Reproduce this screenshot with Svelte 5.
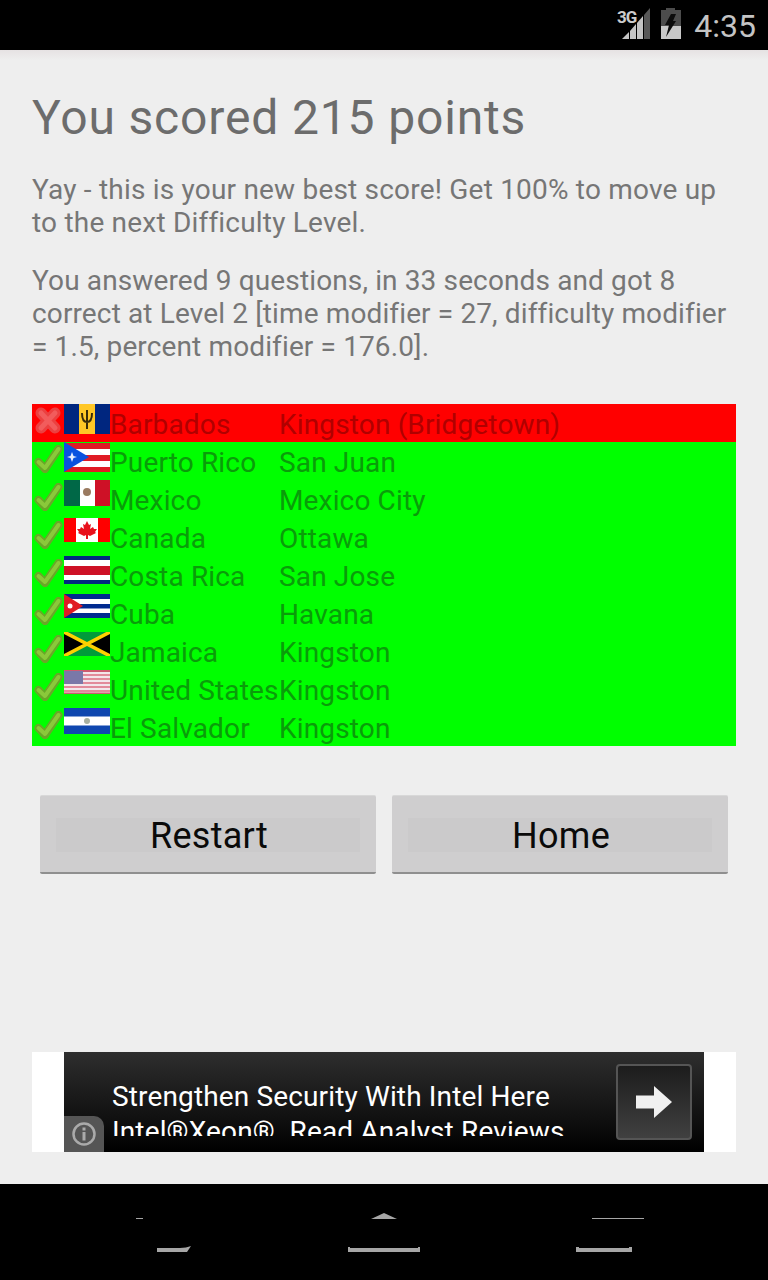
<script>
  const rows = [
    { flag: 'bb', name: 'Barbados', capital: 'Kingston (Bridgetown)', ok: false },
    { flag: 'pr', name: 'Puerto Rico', capital: 'San Juan', ok: true },
    { flag: 'mx', name: 'Mexico', capital: 'Mexico City', ok: true },
    { flag: 'ca', name: 'Canada', capital: 'Ottawa', ok: true },
    { flag: 'cr', name: 'Costa Rica', capital: 'San Jose', ok: true },
    { flag: 'cu', name: 'Cuba', capital: 'Havana', ok: true },
    { flag: 'jm', name: 'Jamaica', capital: 'Kingston', ok: true },
    { flag: 'us', name: 'United States', capital: 'Kingston', ok: true },
    { flag: 'sv', name: 'El Salvador', capital: 'Kingston', ok: true }
  ];

  // flag heights differ a little in the source images
  const flagHeight = { bb: 30, pr: 30, mx: 26, ca: 24, cr: 28, cu: 24, jm: 24, us: 24, sv: 26 };
</script>

<div class="screen">
  <header class="status-bar">
    <svg class="signal" width="30" height="32" viewBox="0 0 30 32">
      <path d="M29 0V31H23V7Z" fill="#585858" />
      <path d="M22 8V31H16V15Z" fill="#c4c4c4" />
      <path d="M15 16V31H9V23Z" fill="#c4c4c4" />
      <path d="M8 24V31H1Z" fill="#c4c4c4" />
    </svg>
    <span class="net">3G</span>
    <svg class="battery" width="22" height="32" viewBox="0 0 22 32">
      <path d="M6 0H15V2H21V31H1V2H6Z" fill="#4c4c4c" />
      <path d="M1 18H21V31H1Z" fill="#c8c8c8" />
      <path d="M11 6H16L13 13H16L6 29L9 17H5Z" fill="#0c0c0c" />
    </svg>
    <span class="clock">4:35</span>
  </header>

  <main class="content">
    <h1>You scored 215 points</h1>
    <p class="best">Yay - this is your new best score! Get 100% to move up to the next Difficulty Level.</p>
    <p class="detail">You answered 9 questions, in 33 seconds and got 8 correct at Level 2 [time modifier = 27, difficulty modifier = 1.5, percent modifier = 176.0].</p>

    <div class="results">
      {#each rows as row}
        <div class="row" class:wrong={!row.ok}>
          <svg class="mark" width="32" height="38" viewBox="0 0 32 38">
            {#if row.ok}
              <path d="M6.500 20L13 27L26.500 7" fill="none" stroke="#69a728" stroke-width="8" stroke-linecap="round" stroke-linejoin="round" />
              <path d="M6.500 20L13 26L26.500 7" fill="none" stroke="#8ac93a" stroke-width="4" stroke-linecap="round" stroke-linejoin="round" />
            {:else}
              <path d="M9 9L23 24M23 9L9 24" fill="none" stroke="#ec4040" stroke-width="11" stroke-linecap="round" />
              <path d="M9 9L23 24M23 9L9 24" fill="none" stroke="#f25c5c" stroke-width="5" stroke-linecap="round" />
            {/if}
          </svg>
          <svg class="flag" width="46" height={flagHeight[row.flag]} viewBox="0 0 46 {flagHeight[row.flag]}" preserveAspectRatio="none">
            {#if row.flag === 'bb'}
              <rect width="46" height="30" fill="#00267f" />
              <rect x="15" width="16" height="30" fill="#ffc726" />
              <path d="M23 6V25M18 9C18 15 20 18 23 18C26 18 28 15 28 9" stroke="#3a2c08" stroke-width="2" fill="none" />
            {:else if row.flag === 'pr'}
              <rect y="1" width="46" height="29" fill="#fff" />
              <rect y="1" width="46" height="6" fill="#e01b24" />
              <rect y="13" width="46" height="6" fill="#e01b24" />
              <rect y="25" width="46" height="5" fill="#e01b24" />
              <path d="M0 0L25 15L0 30Z" fill="#0a52e0" />
              <path d="M8 10L9.500 14L13 15L9.500 16L8 20L6.500 16L3 15L6.500 14Z" fill="#e8eeff" />
            {:else if row.flag === 'mx'}
              <rect width="16" height="26" fill="#006847" />
              <rect x="16" width="15" height="26" fill="#fff" />
              <rect x="31" width="15" height="26" fill="#ce1126" />
              <circle cx="23" cy="12" r="4" fill="#9a7a60" />
            {:else if row.flag === 'ca'}
              <rect width="46" height="24" fill="#ff0000" />
              <rect x="12" width="22" height="24" fill="#fff" />
              <path d="M23 3L25 7L27 6L26 11L29 9L30 11L33 11L31 14L32 15L26 18L24 17V21H22V17L20 18L14 15L15 14L13 11L16 11L17 9L20 11L19 6L21 7Z" fill="#e8101c" />
            {:else if row.flag === 'cr'}
              <rect width="46" height="28" fill="#fff" />
              <rect width="46" height="4" fill="#002b7f" />
              <rect y="24" width="46" height="4" fill="#002b7f" />
              <rect y="10" width="46" height="9" fill="#ce1126" />
            {:else if row.flag === 'cu'}
              <rect width="46" height="24" fill="#fff" />
              <rect width="46" height="5" fill="#002a8f" />
              <rect y="10" width="46" height="4.500" fill="#002a8f" />
              <rect y="19" width="46" height="5" fill="#002a8f" />
              <path d="M0 0L19 12L0 24Z" fill="#e01b24" />
              <circle cx="6" cy="12" r="2.500" fill="#fff" />
            {:else if row.flag === 'jm'}
              <rect width="46" height="24" fill="#009b3a" />
              <path d="M0 0L23 12L0 24ZM46 0L23 12L46 24Z" fill="#000" />
              <path d="M0 0L46 24M46 0L0 24" stroke="#fed100" stroke-width="3.500" />
            {:else if row.flag === 'us'}
              <rect width="46" height="24" fill="#f2e6ea" />
              <rect width="46" height="2" fill="#cf5a6e" />
              <rect y="4" width="46" height="2" fill="#e28a9a" />
              <rect y="8" width="46" height="2" fill="#e28a9a" />
              <rect y="12" width="46" height="2" fill="#e28a9a" />
              <rect y="16" width="46" height="2" fill="#e28a9a" />
              <rect y="20" width="46" height="2" fill="#e28a9a" />
              <rect y="22.500" width="46" height="1.500" fill="#cf5a6e" />
              <rect y="1" width="19" height="13" fill="#7a78a8" />
            {:else}
              <rect width="46" height="26" fill="#fff" />
              <rect width="46" height="8.500" fill="#0f47af" />
              <rect y="17.500" width="46" height="8.500" fill="#0f47af" />
              <circle cx="23" cy="13" r="3" fill="#a8b0a0" />
            {/if}
          </svg>
          <span class="name">{row.name}</span>
          <span class="capital">{row.capital}</span>
        </div>
      {/each}
    </div>

    <div class="actions">
      <button><span>Restart</span></button>
      <button><span>Home</span></button>
    </div>

    <div class="ad">
      <div class="ad-inner">
        <div class="ad-text">
          <div>Strengthen Security With Intel Here</div>
          <div>Intel®Xeon®. Read Analyst Reviews</div>
        </div>
        <div class="ad-go">
          <svg width="36" height="32" viewBox="0 0 36 32">
            <path d="M0 9.500H18V0L36 16L18 32V22.500H0Z" fill="#f0f0f0" />
          </svg>
        </div>
        <div class="ad-info">
          <svg width="26" height="26" viewBox="0 0 26 26">
            <circle cx="13" cy="13" r="10.500" fill="none" stroke="#aaa" stroke-width="2.500" />
            <rect x="11.500" y="6.500" width="3" height="3" fill="#aaa" />
            <rect x="11.500" y="11" width="3" height="8.500" fill="#aaa" />
          </svg>
        </div>
      </div>
    </div>
  </main>

  <nav class="nav-bar">
    <svg width="768" height="96" viewBox="0 0 768 96">
      <g fill="#a6a6a6">
        <rect x="136" y="34" width="7" height="1" />
        <path d="M157 64H180C184 64 188 63 191 62L187 68H157Z" />
        <path d="M371 35L384 29L397 35Z" />
        <path d="M348 63H350V64H418V63H420V68H348Z" />
        <rect x="592" y="34" width="52" height="1" />
        <path d="M576 63H579V64H629V63H632V68H576Z" />
      </g>
    </svg>
  </nav>
</div>

<style>
  :global(body) {
    margin: 0;
    background: #eee;
  }

  .screen {
    width: 768px;
    height: 1280px;
    display: flex;
    flex-direction: column;
    font-family: Roboto, "Liberation Sans", sans-serif;
    overflow: hidden;
  }

  .status-bar {
    height: 50px;
    flex: none;
    background: #000;
    display: flex;
    align-items: center;
    justify-content: flex-end;
    padding-right: 12px;
    box-sizing: border-box;
    position: relative;
  }

  .signal {
    position: absolute;
    left: 621px;
    top: 8px;
  }

  .net {
    position: absolute;
    left: 617px;
    top: 8px;
    color: #ccc;
    font-size: 17px;
    font-weight: 700;
    line-height: 18px;
    letter-spacing: -1px;
  }

  .battery {
    position: absolute;
    left: 660px;
    top: 8px;
  }

  .clock {
    color: #c4c4c4;
    font-size: 32px;
    line-height: 50px;
    padding-top: 1px;
  }

  .content {
    flex: 1;
    padding: 33px 32px 0;
    background: linear-gradient(#e6e2e3, #eee 10px);
    display: flex;
    flex-direction: column;
  }

  h1 {
    margin: 0;
    font-size: 48px;
    font-weight: 400;
    line-height: 70px;
    letter-spacing: 0.85px;
    color: #6c6c6c;
  }

  p {
    margin: 0;
    font-size: 28px;
    line-height: 33px;
    letter-spacing: 0.2px;
    color: #767676;
  }

  .best {
    margin-top: 20px;
  }

  .detail {
    margin-top: 25px;
    letter-spacing: 0.13px;
  }

  .results {
    margin-top: 41px;
    background: #0f0;
  }

  .row {
    height: 38px;
    display: flex;
    align-items: flex-start;
    font-size: 28px;
    line-height: 42px;
    letter-spacing: 0.15px;
    color: #0a9c0a;
    background: #0f0;
    white-space: nowrap;
  }

  .row.wrong {
    background: #f00;
    color: #b00000;
  }

  .mark {
    flex: none;
    filter: blur(0.5px);
  }

  .flag {
    flex: none;
    filter: blur(0.4px);
  }

  .name {
    width: 169px;
    flex: none;
  }

  .actions {
    display: flex;
    gap: 16px;
    margin-top: 49px;
    padding: 0 8px;
  }

  button {
    flex: 1;
    height: 79px;
    box-sizing: border-box;
    border: none;
    border-radius: 2px;
    background: #cfcecf;
    border-top: 1px solid #d8d8d8;
    border-bottom: 2px solid #8f8f8f;
    font-family: inherit;
    font-size: 36px;
    letter-spacing: 0.3px;
    color: #0a0a0a;
    padding: 22px 16px 20px;
    display: flex;
  }

  button span {
    flex: 1;
    background: #cbcacb;
    display: flex;
    align-items: center;
    justify-content: center;
    padding: 1px 0 0 2px;
  }

  .ad {
    margin-top: 178px;
    height: 100px;
    background: #fff;
    display: flex;
    justify-content: center;
  }

  .ad-inner {
    width: 640px;
    height: 100px;
    background: linear-gradient(#2e2e2e, #0a0a0a 80%, #000);
    position: relative;
    overflow: hidden;
    color: #fff;
  }

  .ad-text {
    position: absolute;
    left: 48px;
    top: 27px;
    height: 57px;
    overflow: hidden;
    font-size: 28px;
    line-height: 35px;
    letter-spacing: 0.14px;
    white-space: nowrap;
  }

  .ad-go {
    position: absolute;
    left: 552px;
    top: 12px;
    width: 76px;
    height: 76px;
    box-sizing: border-box;
    border: 2px solid #555;
    border-radius: 4px;
    background: linear-gradient(#1c1c1c, #404040);
    display: flex;
    align-items: center;
    justify-content: center;
  }

  .ad-info {
    position: absolute;
    left: 0;
    bottom: 0;
    width: 40px;
    height: 36px;
    background: #555;
    border-top-right-radius: 10px;
    display: flex;
    align-items: center;
    justify-content: center;
  }

  .nav-bar {
    height: 96px;
    flex: none;
    background: #000;
  }

  .nav-bar svg {
    display: block;
  }
</style>
